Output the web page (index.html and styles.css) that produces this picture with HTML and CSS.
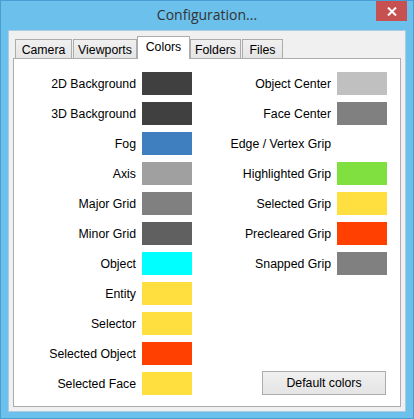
FILE: index.html
```html
<!DOCTYPE html>
<html>
<head>
<meta charset="utf-8">
<link rel="stylesheet" href="styles.css">
</head>
<body>
<div class="window">
  <div class="titlebar">
    <div class="title-spacer"></div>
    <div class="title">Configuration...</div>
    <div class="title-controls">
      <div class="close-btn">
        <svg width="10" height="9" viewBox="0 0 10 9"><path d="M1 0.5 L9 8.5 M9 0.5 L1 8.5" stroke="#fff" stroke-width="2" fill="none"/></svg>
      </div>
    </div>
  </div>
  <div class="client">
    <div class="tabs">
      <div class="tab tab-camera">Camera</div>
      <div class="tab tab-viewports">Viewports</div>
      <div class="tab tab-colors selected">Colors</div>
      <div class="tab tab-folders">Folders</div>
      <div class="tab tab-files">Files</div>
    </div>
    <div class="panel">
      <div class="col col-left">
        <div class="label">2D Background</div><div class="swatch" style="background:#404040"></div>
        <div class="label">3D Background</div><div class="swatch" style="background:#404040"></div>
        <div class="label">Fog</div><div class="swatch" style="background:#3f7fbf"></div>
        <div class="label">Axis</div><div class="swatch" style="background:#a0a0a0"></div>
        <div class="label">Major Grid</div><div class="swatch" style="background:#808080"></div>
        <div class="label">Minor Grid</div><div class="swatch" style="background:#606060"></div>
        <div class="label">Object</div><div class="swatch" style="background:#00ffff"></div>
        <div class="label">Entity</div><div class="swatch" style="background:#ffdf3f"></div>
        <div class="label">Selector</div><div class="swatch" style="background:#ffdf3f"></div>
        <div class="label">Selected Object</div><div class="swatch" style="background:#ff4000"></div>
        <div class="label">Selected Face</div><div class="swatch" style="background:#ffdf3f"></div>
      </div>
      <div class="col-right-wrap">
        <div class="col col-right">
          <div class="label">Object Center</div><div class="swatch" style="background:#c0c0c0"></div>
          <div class="label">Face Center</div><div class="swatch" style="background:#808080"></div>
          <div class="label">Edge / Vertex Grip</div><div class="swatch empty"></div>
          <div class="label">Highlighted Grip</div><div class="swatch" style="background:#80e040"></div>
          <div class="label">Selected Grip</div><div class="swatch" style="background:#ffdf3f"></div>
          <div class="label">Precleared Grip</div><div class="swatch" style="background:#ff4000"></div>
          <div class="label">Snapped Grip</div><div class="swatch" style="background:#808080"></div>
        </div>
        <button class="btn">Default colors</button>
      </div>
    </div>
  </div>
</div>
</body>
</html>
```

FILE: styles.css
```css
html, body {
  margin: 0;
  padding: 0;
}
body {
  font-family: "Liberation Sans", Arial, sans-serif;
  font-size: 12.3px;
  color: #000;
}
.window {
  width: 414px;
  height: 419px;
  box-sizing: border-box;
  border: 1px solid #4a9dd3;
  background: #6bc0ec;
  display: flex;
  flex-direction: column;
}
.titlebar {
  height: 29px;
  display: grid;
  grid-template-columns: 1fr auto 1fr;
  align-items: start;
}
.title {
  font-family: "Open Sans", "Noto Sans", sans-serif;
  font-size: 14px;
  color: #333;
  line-height: 28px;
}
.title-controls {
  display: flex;
  justify-content: flex-end;
  padding-right: 6px;
}
.close-btn {
  width: 31px;
  height: 20px;
  background: #c75050;
  display: flex;
  align-items: center;
  justify-content: center;
}
.client {
  flex: 1;
  margin: 0 7px 6px 7px;
  background: #f0f0f0;
  box-shadow: inset 0 0 0 1px #a9cbe3;
  padding: 6px 5px 5px 5px;
  display: flex;
  flex-direction: column;
}
.tabs {
  display: flex;
  align-items: flex-end;
  height: 23px;
  padding-left: 2px;
  margin-bottom: -1px;
  position: relative;
  z-index: 1;
}
.tab {
  box-sizing: border-box;
  height: 19px;
  margin-bottom: 1px;
  border: 1px solid #acacac;
  border-bottom: none;
  background: linear-gradient(#f0f0f0, #e5e5e5);
  display: flex;
  align-items: center;
  justify-content: center;
  padding-top: 1px;
}
.tab-camera { width: 57px; }
.tab-viewports { width: 64px; margin-left: 1px; }
.tab-colors { width: 53px; }
.tab-folders { width: 51px; }
.tab-files { width: 41px; margin-left: 1px; }
.tab.selected {
  height: 23px;
  margin-bottom: 0;
  background: #fff;
  padding-top: 0;
  padding-bottom: 2px;
}
.panel {
  flex: 1;
  background: #fff;
  border: 1px solid #acacac;
  padding: 13px 0 11px 0;
  display: flex;
  gap: 6px;
}
.col {
  display: grid;
  grid-auto-rows: 23px;
  row-gap: 7px;
  column-gap: 6px;
  align-items: center;
  align-content: start;
}
.col-left {
  grid-template-columns: 122px 50px;
}
.col-right {
  grid-template-columns: 133px 50px;
}
.col-right-wrap {
  display: flex;
  flex-direction: column;
}
.label {
  text-align: right;
  white-space: nowrap;
}
.swatch {
  height: 23px;
}
.btn {
  margin-top: auto;
  align-self: flex-end;
  margin-right: 1px;
  width: 124px;
  height: 24px;
  box-sizing: border-box;
  border: 1px solid #acacac;
  background: linear-gradient(#f0f0f0, #e5e5e5);
  font-family: "Liberation Sans", Arial, sans-serif;
  font-size: 12.3px;
  color: #000;
  padding: 0;
}
```
